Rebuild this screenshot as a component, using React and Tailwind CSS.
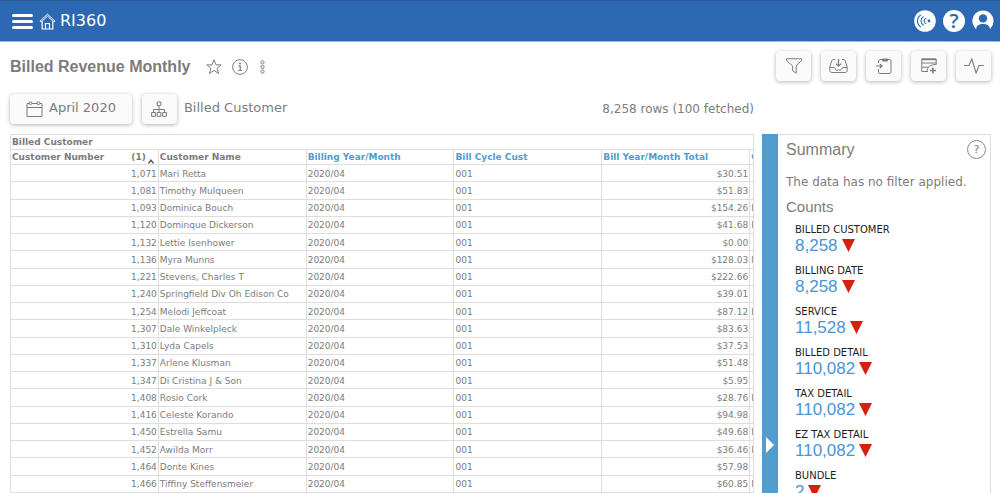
import { useState } from "react";

const rows = [
  { id: "1,071", name: "Mari Retta", total: "$30.51" },
  { id: "1,081", name: "Timothy Mulqueen", total: "$51.83" },
  { id: "1,093", name: "Dominica Bouch", total: "$154.26", flag: "I" },
  { id: "1,120", name: "Dominque Dickerson", total: "$41.68", flag: "I" },
  { id: "1,132", name: "Lettie Isenhower", total: "$0.00" },
  { id: "1,136", name: "Myra Munns", total: "$128.03", flag: "I" },
  { id: "1,221", name: "Stevens, Charles T", total: "$222.66" },
  { id: "1,240", name: "Springfield Div Oh Edison Co", total: "$39.01" },
  { id: "1,254", name: "Melodi Jeffcoat", total: "$87.12", flag: "I" },
  { id: "1,307", name: "Dale Winkelpleck", total: "$83.63" },
  { id: "1,310", name: "Lyda Capels", total: "$37.53" },
  { id: "1,337", name: "Arlene Klusman", total: "$51.48" },
  { id: "1,347", name: "Di Cristina J & Son", total: "$5.95" },
  { id: "1,408", name: "Rosio Cork", total: "$28.76", flag: "I" },
  { id: "1,416", name: "Celeste Korando", total: "$94.98" },
  { id: "1,450", name: "Estrella Samu", total: "$49.68", flag: "I" },
  { id: "1,452", name: "Awilda Morr", total: "$36.46", flag: "I" },
  { id: "1,464", name: "Donte Kines", total: "$57.98" },
  { id: "1,466", name: "Tiffiny Steffensmeier", total: "$60.85", flag: "I" },
];

const counts = [
  { label: "BILLED CUSTOMER", value: "8,258" },
  { label: "BILLING DATE", value: "8,258" },
  { label: "SERVICE", value: "11,528" },
  { label: "BILLED DETAIL", value: "110,082" },
  { label: "TAX DETAIL", value: "110,082" },
  { label: "EZ TAX DETAIL", value: "110,082" },
  { label: "BUNDLE", value: "2" },
];

function Icon({ size = 16, width, height, className = "", children }) {
  const w = width || size;
  const h = height || size;
  return (
    <svg
      width={w}
      height={h}
      viewBox={`0 0 ${w} ${h}`}
      fill="none"
      stroke="currentColor"
      strokeWidth="1"
      aria-hidden="true"
      className={`shrink-0 ${className}`}
    >
      {children}
    </svg>
  );
}

const tools = [
  {
    label: "Filter",
    icon: (
      <Icon>
        <path d="M.5 .8h15v1.6L10.2 8v7.3L6.6 12.6V8L.5 2.4z" />
      </Icon>
    ),
  },
  {
    label: "Download",
    icon: (
      <Icon width={19} height={16}>
        <path d="M6 1.5H4.6C3.6 1.5 3 2 2.7 3L.8 9v3.6c0 1 .7 1.9 1.8 1.9h13.8c1.1 0 1.8-.9 1.8-1.9V9l-1.9-6c-.3-1-.9-1.5-1.9-1.5H13" />
        <path d="M1 9.6h4.2c1 0 .9 2.4 2 2.4h4.6c1.1 0 1-2.4 2-2.4H18" />
        <path d="M9.5 1v7M6.8 5.6l2.7 2.6 2.7-2.6" strokeWidth="1.2" />
      </Icon>
    ),
  },
  {
    label: "Paste",
    icon: (
      <Icon>
        <path d="M2.5 5V2.8c0-.8.5-1.3 1.3-1.3h9.9c.8 0 1.3.5 1.3 1.3v11.4c0 .8-.5 1.3-1.3 1.3H3.8c-.8 0-1.3-.5-1.3-1.3V11" />
        <path d="M6.5 1h5v2h-5z" fill="currentColor" />
        <path d="M0 8h6M3.8 5.8 6 8l-2.2 2.2" strokeWidth="1.2" />
      </Icon>
    ),
  },
  {
    label: "Add columns",
    icon: (
      <Icon>
        <path d="M7 13.5H.8V1h14.4v5.5M.8 5h14.4M.8 9.2H8M5.8 13.3C6.4 9 9.5 6.5 15.2 6.5" />
        <path d="M.8 1.4h14.4" strokeWidth="1.6" />
        <path d="M12 9.5v6M9 12.5h6" strokeWidth="1.6" />
      </Icon>
    ),
  },
  {
    label: "Activity",
    icon: (
      <Icon width={20} height={16}>
        <path d="M0 7.5h5L7.8 1l4.3 14L15 7.5h5" strokeWidth="1.1" />
      </Icon>
    ),
  },
];

const btn = "flex h-[30px] items-center justify-center rounded-sm bg-[#fafafa] shadow-[0_1px_4px_rgba(0,0,0,0.3)]";
const cell = "overflow-hidden border border-[#dedede] px-px whitespace-nowrap";

function TopBar() {
  return (
    <header className="flex h-[42px] shrink-0 items-center border-t border-b border-t-[#28599a] border-b-[#9db9dc] bg-[#2d68b2] pr-1.5 pl-3 text-white">
      <button aria-label="Menu" className="flex w-[21px] flex-col gap-[3px]">
        <span className="h-[3px] rounded-full bg-white" />
        <span className="h-[3px] rounded-full bg-white" />
        <span className="h-[3px] rounded-full bg-white" />
      </button>
      <a href="#home" className="ml-1.5 flex items-center gap-1 text-[16px] leading-5">
        <Icon width={17} height={17}>
          <path d="M1 8.2 8.5 1.2 16 8.2l-1 1-6.5-6-6.5 6z" />
          <path d="M3.2 8.5V16h10.6V8.5M6.5 16v-5.5h4V16" strokeWidth="1.2" />
        </Icon>
        RI360
      </a>
      <div className="ml-auto flex items-center gap-[7px]">
        <button aria-label="Live feed" className="text-[#2d68b2]">
          <Icon size={22}>
            <circle cx="11" cy="11" r="10.8" fill="#fff" stroke="none" />
            <circle cx="15" cy="11" r="1.4" fill="currentColor" stroke="none" />
            <path d="M12.4 8.2c-3 .9-3 4.7 0 5.6M9.6 6.6c-3.4 1.9-3.4 6.9 0 8.8M6.8 5c-4.4 2.8-4.4 9.2 0 12" strokeWidth="1.1" />
          </Icon>
        </button>
        <button aria-label="Help" className="flex size-[22px] items-center justify-center rounded-full bg-white font-['Open_Sans',sans-serif] text-[20px] leading-none font-semibold text-[#2d68b2]">
          ?
        </button>
        <button aria-label="Account" className="text-[#2d68b2]">
          <Icon size={22}>
            <circle cx="11" cy="11" r="10.6" fill="#fff" stroke="none" />
            <circle cx="11" cy="8.4" r="4.2" fill="currentColor" stroke="none" />
            <path d="M4.2 22v-3.6c.6-3.4 3.4-4.4 6.8-4.4s6.2 1 6.8 4.4V22z" fill="currentColor" stroke="none" />
          </Icon>
        </button>
      </div>
    </header>
  );
}

function DataTable() {
  return (
    <div className="min-h-0 flex-1 overflow-hidden border-r border-[#dedede]">
      <table className="h-full w-[888px] table-fixed border-collapse text-[9px] leading-[13px]">
        <thead className="text-left font-bold">
          <tr className="h-[15px]">
            <th colSpan={6} className={cell}>Billed Customer</th>
          </tr>
          <tr className="h-[15px]">
            <th className={cell}>
              <div className="flex items-center">
                Customer Number
                <span className="ml-auto">(1)</span>
                <Icon width={11} height={8} className="self-end text-[#555]">
                  <path d="M2.5 7.4 5 4.2l2.5 3.2" strokeWidth="1.5" />
                </Icon>
              </div>
            </th>
            <th className={cell}>Customer Name</th>
            <th className={`${cell} text-[#4f9dd2]`}>Billing Year/Month</th>
            <th className={`${cell} text-[#4f9dd2]`}>Bill Cycle Cust</th>
            <th className={`${cell} text-[#4f9dd2]`}>Bill Year/Month Total</th>
            <th className={`${cell} text-[#4f9dd2]`}>C</th>
          </tr>
        </thead>
        <tbody>
          {rows.map((row) => (
            <tr key={row.id}>
              <td className={`${cell} pt-0.5 text-right`}>{row.id}</td>
              <td className={`${cell} pt-0.5`}>{row.name}</td>
              <td className={`${cell} pt-0.5`}>2020/04</td>
              <td className={`${cell} pt-0.5`}>001</td>
              <td className={`${cell} pt-0.5 text-right`}>{row.total}</td>
              <td className={`${cell} pt-0.5`}>{row.flag}</td>
            </tr>
          ))}
        </tbody>
      </table>
    </div>
  );
}

function Summary() {
  const [open, setOpen] = useState(true);

  return (
    <aside className="mt-10 flex min-h-0 shrink-0">
      <button
        aria-label="Toggle summary"
        onClick={() => setOpen(!open)}
        className="flex w-4 shrink-0 items-end justify-center bg-[#519dd0] pb-10 text-white"
      >
        <Icon width={8} height={16}>
          <path d="M0 0l8 8-8 8z" fill="currentColor" stroke="none" />
        </Icon>
      </button>
      {open && (
        <div className="w-[213px] overflow-hidden border border-b-0 border-l-0 border-[#dedede] pt-[5px] pr-1 pl-2">
          <div className="flex h-5 items-center justify-between">
            <h2 className="font-['Liberation_Sans',sans-serif] text-[16px]">Summary</h2>
            <button
              aria-label="Summary help"
              className="flex size-[19px] items-center justify-center self-start rounded-full border border-[#8a8a8a] text-[11px] leading-none"
            >
              ?
            </button>
          </div>
          <p className="mt-3.5 text-[12px] leading-4 whitespace-nowrap">The data has no filter applied.</p>
          <h3 className="mt-[9px] font-['Liberation_Sans',sans-serif] text-[15px] leading-4">Counts</h3>
          <dl className="mt-2 flex flex-col gap-2.5 pl-[9px]">
            {counts.map((item) => (
              <div key={item.label}>
                <dt className="text-[10px] leading-[14px] text-[#1c1c1c]">{item.label}</dt>
                <dd className="flex items-center gap-1 font-['Liberation_Sans',sans-serif] text-[17px] leading-[17px] text-[#4a94d6]">
                  {item.value}
                  <Icon width={13} height={13} className="text-[#d3200f]">
                    <path d="M0 0h13L6.5 13z" fill="currentColor" stroke="none" />
                  </Icon>
                </dd>
              </div>
            ))}
          </dl>
        </div>
      )}
    </aside>
  );
}

export default function App() {
  return (
    <div className="flex h-screen flex-col overflow-hidden bg-white font-['DejaVu_Sans',Verdana,sans-serif] text-[#7c7c7c]">
      <TopBar />
      <main className="flex min-h-0 flex-1 flex-col pt-[9px] pr-[9px] pl-2.5">
        <div className="flex shrink-0 items-center">
          <h1 className="pt-0.5 font-['Liberation_Sans',sans-serif] text-[16px] leading-5 font-bold">Billed Revenue Monthly</h1>
          <div className="ml-4 flex items-center gap-2.5 pt-0.5">
            <button aria-label="Favorite">
              <Icon>
                <path d="M8 .9l2 5h5.2l-4.1 3.3 1.5 5.3L8 11.4l-4.6 3.1 1.5-5.3L.8 5.9H6z" />
              </Icon>
            </button>
            <button aria-label="Info">
              <Icon>
                <circle cx="8" cy="8" r="7.4" />
                <path d="M6.6 6.8H8.2V11.5M6.4 11.5h3.6" strokeWidth="1.2" />
                <circle cx="8" cy="4.5" r="1" fill="currentColor" stroke="none" />
              </Icon>
            </button>
            <button aria-label="More">
              <Icon width={9} height={14}>
                <circle cx="4.5" cy="2.4" r="1.6" />
                <circle cx="4.5" cy="7" r="1.6" />
                <circle cx="4.5" cy="11.6" r="1.6" />
              </Icon>
            </button>
          </div>
          <div className="ml-auto flex gap-2.5">
            {tools.map((tool) => (
              <button key={tool.label} aria-label={tool.label} className={`${btn} w-[35px]`}>
                {tool.icon}
              </button>
            ))}
          </div>
        </div>

        <div className="mt-[13px] flex min-h-0 flex-1 gap-2">
          <div className="flex min-w-0 flex-1 flex-col gap-2.5">
            <div className="flex shrink-0 items-center">
              <button className={`${btn} gap-1.5 px-4 text-[13px]`}>
                <Icon width={17} height={16}>
                  <path d="M3 2.5H1v13h15v-13h-2M6 2.5h5M1 6.5h15" />
                  <circle cx="4.5" cy="2.2" r="1.4" />
                  <circle cx="12.5" cy="2.2" r="1.4" />
                </Icon>
                <span className="pb-0.5">April 2020</span>
              </button>
              <button aria-label="Hierarchy" className={`${btn} ml-2.5 w-[35px]`}>
                <Icon>
                  <path d="M6.2 1h3.6v3.6H6.2zM.6 11.5h3.8v3.8H.6zM6.1 11.5h3.8v3.8H6.1zM11.6 11.5h3.8v3.8h-3.8zM8 4.6v6.9M2.5 11.5v-3h11v3" />
                </Icon>
              </button>
              <span className="ml-[7px] pb-0.5 text-[13px]">Billed Customer</span>
              <span className="ml-auto text-[12px]">8,258 rows (100 fetched)</span>
            </div>
            <DataTable />
          </div>
          <Summary />
        </div>
      </main>
    </div>
  );
}
